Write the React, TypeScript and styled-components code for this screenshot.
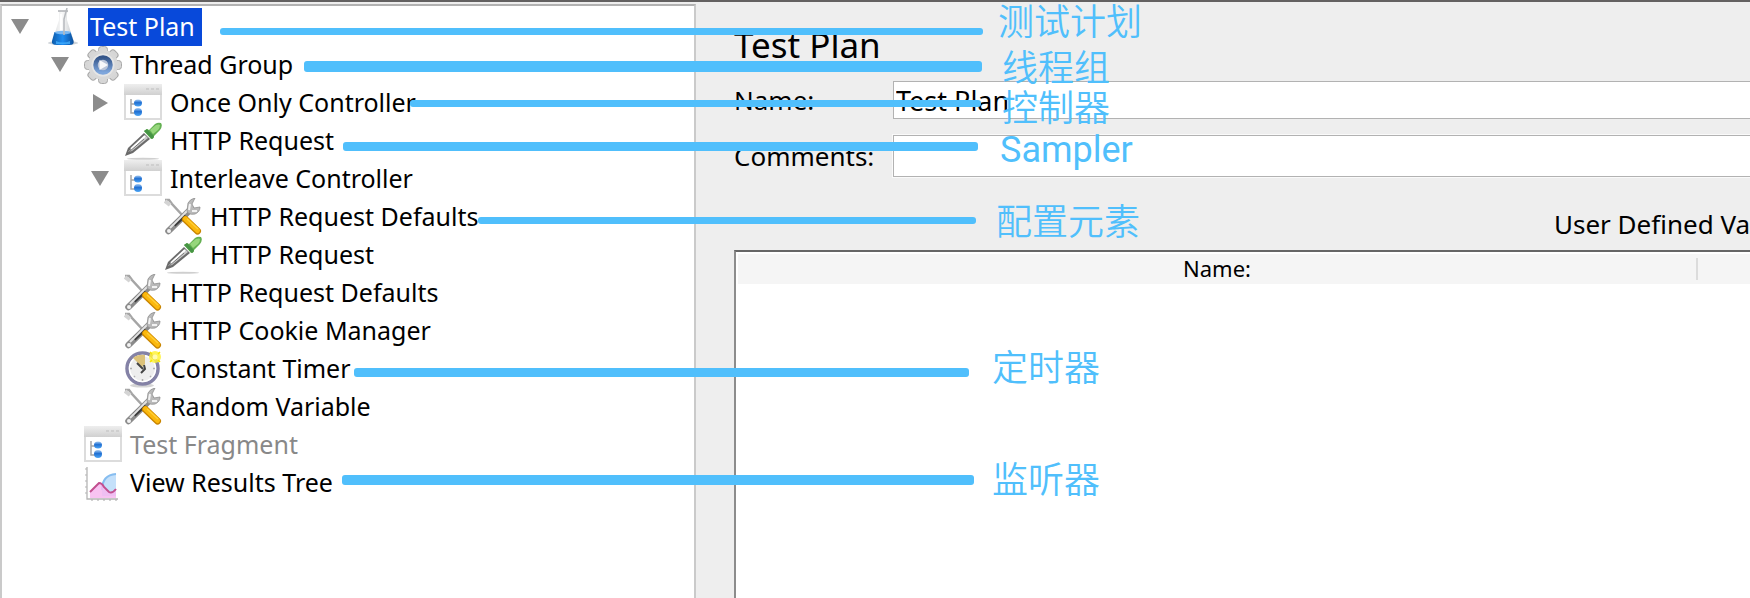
import React, { useState } from "react";
import styled, { createGlobalStyle } from "styled-components";

const accent = "#50bffc";
const uiFont = '"Noto Sans", "Noto Sans CJK SC", sans-serif';

const GlobalStyle = createGlobalStyle`
  *, *::before, *::after { box-sizing: border-box; }
  body { margin: 0; background: #eeeeee; color: #000; font-family: ${uiFont}; }
`;

const Window = styled.div`
  position: relative;
  display: grid;
  grid-template-columns: 696px minmax(0, 1fr);
  min-height: 100vh;
  overflow: hidden;
  border-top: 2px solid #636161;
  background: #eeeeee;
`;

/* ---------- tree ---------- */

const TreePane = styled.nav`
  margin-top: 2px;
  padding: 2px 0;
  background: #fff;
  border: 2px solid #cacaca;
  border-top-color: #b2b2b2;
  border-bottom: 0;
`;

const Branch = styled.ul<{ $nested?: boolean }>`
  margin: 0;
  padding: 0 0 0 ${(p) => (p.$nested ? 40 : 0)}px;
  list-style: none;
`;

const Row = styled.div`
  display: flex;
  align-items: center;
  gap: 6px;
  height: 38px;
`;

const ToggleSlot = styled.span`
  flex: none;
  display: flex;
  justify-content: center;
  width: 36px;
`;

const Toggle = styled.button`
  display: flex;
  padding: 0;
  border: 0;
  background: none;
  cursor: pointer;
`;

const IconBox = styled.svg`
  flex: none;
  width: 38px;
  height: 38px;
`;

const NodeLabel = styled.button<{ $selected?: boolean; $disabled?: boolean }>`
  height: 38px;
  padding: 0 7px 2px 2px;
  border: 0;
  font-family: inherit;
  font-size: 25px;
  line-height: 36px;
  white-space: nowrap;
  text-align: left;
  color: ${(p) => (p.$selected ? "#fff" : p.$disabled ? "#888" : "#000")};
  background: ${(p) => (p.$selected ? "#0849da" : "transparent")};
`;

/* ---------- editor ---------- */

const Editor = styled.main`
  min-width: 0;
  display: flex;
  flex-direction: column;
  padding: 20px 0 0 38px;
`;

const Title = styled.h1`
  margin: 0 0 13px;
  font-size: 35px;
  line-height: 46px;
  font-weight: 400;
`;

const Field = styled.div`
  display: grid;
  grid-template-columns: 159px minmax(0, 1fr);
  align-items: center;
  margin-bottom: 16px;
`;

const FieldLabel = styled.label`
  font-size: 26px;
  line-height: 38px;
`;

const TextBox = styled.input<{ $tall?: boolean }>`
  width: 100%;
  height: ${(p) => (p.$tall ? 42 : 38)}px;
  margin: 0;
  padding: 0 2px;
  border: solid #b2b2b2;
  border-width: 1px 0 1px 1px;
  border-radius: 0;
  outline: ${(p) => (p.$tall ? "1px solid #fafafa" : "none")};
  background: #fff;
  color: #000;
  font-family: inherit;
  font-size: 27px;
`;

const TableTitle = styled.h2`
  align-self: flex-end;
  width: 196px;
  margin: 13px 0 8px;
  overflow: hidden;
  font-size: 26px;
  line-height: 36px;
  font-weight: 400;
  white-space: nowrap;
`;

const TableFrame = styled.div`
  flex: 1;
  padding: 2px 0 0 2px;
  border-top: 2px solid #666;
  border-left: 2px solid #8c8c8c;
  background: #fff;
`;

const Table = styled.table`
  width: 100%;
  table-layout: fixed;
  border-collapse: collapse;
  background: #f5f5f5;
`;

const HeadCell = styled.th<{ $last?: boolean }>`
  width: ${(p) => (p.$last ? "52px" : "auto")};
  height: 30px;
  padding: 0;
  font-size: 22px;
  line-height: 20px;
  font-weight: 400;
`;

const HeadText = styled.span<{ $divided?: boolean }>`
  display: block;
  height: 22px;
  border-right: ${(p) => (p.$divided ? "2px solid #dcdcdc" : "0")};
`;

/* ---------- annotations drawn over the window ---------- */

const Overlay = styled.div`
  position: absolute;
  inset: -2px 0 0;
  pointer-events: none;
`;

const Line = styled.span<{ $x: number; $y: number; $w: number; $h: number }>`
  position: absolute;
  left: ${(p) => p.$x}px;
  top: ${(p) => p.$y}px;
  width: ${(p) => p.$w}px;
  height: ${(p) => p.$h}px;
  border-radius: 3px;
  background: ${accent};
`;

const Note = styled.span<{ $x: number; $y: number; $latin?: boolean }>`
  position: absolute;
  left: ${(p) => p.$x}px;
  top: ${(p) => p.$y}px;
  color: ${accent};
  font-family: ${(p) =>
    p.$latin ? 'Roboto, "Liberation Sans", sans-serif' : '"Noto Sans CJK SC", sans-serif'};
  font-size: 36px;
  font-weight: ${(p) => (p.$latin ? 400 : 350)};
  line-height: 36px;
  white-space: nowrap;
`;

/* ---------- icons ---------- */

type IconName = "flask" | "gear" | "controller" | "dropper" | "tools" | "clock" | "chart";

const Flask = () => (
  <>
    <defs>
      <linearGradient id="glass" x1="0" x2="1">
        <stop offset="0" stopColor="#d9dbdd" />
        <stop offset=".45" stopColor="#fafafa" />
        <stop offset="1" stopColor="#c4c8cb" />
      </linearGradient>
      <linearGradient id="liquid" x1="0" x2="1">
        <stop offset="0" stopColor="#0d5cab" />
        <stop offset=".5" stopColor="#1e8cf2" />
        <stop offset="1" stopColor="#0c4f9c" />
      </linearGradient>
    </defs>
    <ellipse cx="19" cy="35" rx="15" ry="2" fill="#b9c0c8" opacity=".7" />
    <path d="M15 3h9l-1 2v7l7 22q0 3-4 3H12q-4 0-4-3l7-22V5z" fill="url(#glass)" />
    <path d="M14 3h10" stroke="#aeb1b4" strokeWidth="1.5" />
    <path d="M10.500 24h16l3 9q1 4-4 4H13q-6 0-5-4z" fill="url(#liquid)" />
    <ellipse cx="19" cy="24.500" rx="8" ry="1.800" fill="#79b8f3" />
    <path d="M12 33q7 3 14 0v3H12z" fill="#49b4ff" opacity=".7" />
    <path d="M23 0l-3 11v16" fill="none" stroke="#b6b9bd" strokeWidth="1.500" />
    <path d="M17 6v16" stroke="#fff" strokeWidth="2" />
  </>
);

const Gear = () => (
  <>
    <defs>
      <linearGradient id="ring" x1="0" y1="0" x2="0" y2="1">
        <stop offset="0" stopColor="#34558a" />
        <stop offset="1" stopColor="#7ea6dc" />
      </linearGradient>
    </defs>
    <g fill="#d6d6d6" stroke="#a8a8a8" strokeWidth="1">
      {[0, 45, 90, 135].map((a) => (
        <rect key={a} x="14.500" y=".5" width="9" height="37" rx="3" transform={`rotate(${a} 19 19)`} />
      ))}
    </g>
    <circle cx="19" cy="19" r="15" fill="#d8d8d8" />
    <circle cx="19" cy="19" r="11.500" fill="#e6e6e6" />
    <circle cx="19" cy="19" r="7.500" fill="#b9c4d8" stroke="url(#ring)" strokeWidth="4.500" />
    <path d="M15.500 14l8.500 5-8.500 5z" fill="#f7f8fa" />
  </>
);

const Controller = () => (
  <>
    <defs>
      <linearGradient id="bar" x1="0" y1="0" x2="0" y2="1">
        <stop offset="0" stopColor="#eeeeee" />
        <stop offset="1" stopColor="#d0d0d0" />
      </linearGradient>
      <linearGradient id="ball" x1="0" y1="0" x2="0" y2="1">
        <stop offset="0" stopColor="#a5cbf3" />
        <stop offset=".45" stopColor="#1f6fd2" />
        <stop offset="1" stopColor="#4ea6f5" />
      </linearGradient>
    </defs>
    <rect x="1" y="1" width="36" height="34" fill="#fff" stroke="#dcdcdc" strokeWidth="2" />
    <rect x="0" y="0" width="38" height="11" fill="url(#bar)" />
    <path d="M22 5h3m2 0h3m2 0h3" stroke="#cfcfcf" strokeWidth="2" />
    <path d="M7 15v14h4M7 20h4" fill="none" stroke="#a5a5a5" strokeWidth="1.500" />
    <ellipse cx="14" cy="19" rx="4" ry="3.500" fill="url(#ball)" />
    <ellipse cx="14" cy="28" rx="4" ry="4" fill="url(#ball)" />
  </>
);

const Dropper = () => (
  <>
    <ellipse cx="19" cy="36.800" rx="16" ry="1" fill="#cfcfcf" />
    <path d="M1 34l3-8L20 11l6 6L9 31z" fill="#6b6b6b" />
    <path d="M4 30L21 13l3 3L8 29z" fill="#c9c9c9" />
    <path d="M7 27L21 14" stroke="#fff" strokeWidth="2" />
    <path d="M5 30L20 17" stroke="#777" strokeWidth="1" />
    <path d="M20 9l3-2 2 1 6-6q3-2 6-1 2 3-1 7l-6 6q0 3-3 3z" fill="#64b052" />
    <path d="M26 8l6-5q3-1 4 0 0 3-2 5l-5 4z" fill="#96d67c" />
    <path d="M20 9l8 8q2-1 2-3l-7-7z" fill="#469445" />
  </>
);

const Tools = () => (
  <>
    <path d="M1 2l4 0 3 4 12 13" fill="none" stroke="#a5a5a5" strokeWidth="2.500" />
    <path d="M1 3l5 4" stroke="#d4d4d4" strokeWidth="4" />
    <path d="M4.500 33L27 11" stroke="#8b8b8b" strokeWidth="6.500" strokeLinecap="round" />
    <path d="M10 27L21 17" stroke="#393939" strokeWidth="4" />
    <path d="M6 30L25 11" stroke="#e3e3e3" strokeWidth="2" />
    <circle cx="5" cy="33" r="2" fill="#f3f3f3" />
    <path d="M23 13l1-8q2-4 7-5l-3 6 2 4 6-1q0 5-5 7-4 1-7-1z" fill="#b9b9b9" stroke="#8f8f8f" strokeWidth=".8" />
    <path d="M25 12l1-6m2 7h5" stroke="#f2f2f2" strokeWidth="2" />
    <path d="M21.500 21.500L33.500 33" stroke="#c98500" strokeWidth="7" strokeLinecap="round" />
    <path d="M21.500 21L33.500 32.500" stroke="#fbb80d" strokeWidth="5" strokeLinecap="round" />
    <path d="M23 21l11 10" stroke="#ffcf3a" strokeWidth="1.300" />
  </>
);

const Clock = () => (
  <>
    <ellipse cx="18" cy="35.500" rx="12" ry="2" fill="#d5d5d5" />
    <circle cx="18.500" cy="18.500" r="15.500" fill="#eeeeee" stroke="#8482a6" strokeWidth="3.500" />
    <circle cx="18.500" cy="18.500" r="13" fill="none" stroke="#fff" strokeWidth="1.500" />
    <path d="M9 8q5-4 12-3v9l-3 3z" fill="#dcc27a" />
    <path d="M13 13l6 6M20 15l1 4-4 4" fill="none" stroke="#444" strokeWidth="2" />
    <path d="M18.500 29v2M29 18.500h2M6 18.500h2M10 27l1-1M27 27l-1-1" stroke="#b0b0b0" strokeWidth="1.500" />
    <circle cx="31" cy="7" r="6" fill="#fff23a" opacity=".85" />
    <circle cx="31" cy="7" r="2.500" fill="#fffbb0" />
    <path d="M26 2l2 2M36 2l-2 2M26 12l2-2M36 12l-2-2" stroke="#f6e400" strokeWidth="1.500" />
  </>
);

const Chart = () => (
  <>
    <path d="M3 3v32h31" fill="none" stroke="#b5b5b5" strokeWidth="1.300" />
    <path d="M1 5h2M1 11h2M1 17h2M1 23h2M1 29h2M8 35v2M14 35v2M20 35v2M26 35v2M32 35v2" stroke="#b5b5b5" strokeWidth="1.200" />
    <path d="M18 30q-2-17 14-20v22H18z" fill="#c4e0fa" />
    <path d="M18 26q0-15 14-16" fill="none" stroke="#86bdf0" strokeWidth="2" />
    <path d="M6 28l5-5 4-4q3-1 5 4l5 5 3 1 4-3v8H6z" fill="#f7b9f0" opacity=".85" />
    <path d="M6 28l5-5 4-4q3 0 5 4l5 5q3 2 7-3" fill="none" stroke="#c24f8f" strokeWidth="2" />
  </>
);

const drawings: Record<IconName, React.FC> = {
  flask: Flask,
  gear: Gear,
  controller: Controller,
  dropper: Dropper,
  tools: Tools,
  clock: Clock,
  chart: Chart,
};

const NodeIcon = ({ name }: { name: IconName }) => {
  const Drawing = drawings[name];
  return (
    <IconBox viewBox="0 0 38 38" aria-hidden="true">
      <Drawing />
    </IconBox>
  );
};

const Arrow = ({ open }: { open: boolean }) => (
  <svg width="18" height="18" viewBox="0 0 18 18" aria-hidden="true">
    <path d={open ? "M0 1h18L9 16z" : "M2 0v18l15-9z"} fill="#8c8c8c" />
  </svg>
);

/* ---------- data ---------- */

interface TreeNode {
  id: string;
  label: string;
  icon: IconName;
  expandable?: boolean;
  disabled?: boolean;
  children?: TreeNode[];
}

const plan: TreeNode[] = [
  {
    id: "plan",
    label: "Test Plan",
    icon: "flask",
    expandable: true,
    children: [
      {
        id: "group",
        label: "Thread Group",
        icon: "gear",
        expandable: true,
        children: [
          { id: "once", label: "Once Only Controller", icon: "controller", expandable: true },
          { id: "request", label: "HTTP Request", icon: "dropper" },
          {
            id: "interleave",
            label: "Interleave Controller",
            icon: "controller",
            expandable: true,
            children: [
              { id: "inner-defaults", label: "HTTP Request Defaults", icon: "tools" },
              { id: "inner-request", label: "HTTP Request", icon: "dropper" },
            ],
          },
          { id: "defaults", label: "HTTP Request Defaults", icon: "tools" },
          { id: "cookies", label: "HTTP Cookie Manager", icon: "tools" },
          { id: "timer", label: "Constant Timer", icon: "clock" },
          { id: "random", label: "Random Variable", icon: "tools" },
        ],
      },
      { id: "fragment", label: "Test Fragment", icon: "controller", disabled: true },
      { id: "results", label: "View Results Tree", icon: "chart" },
    ],
  },
];

const notes = [
  { text: "测试计划", x: 998, y: 1, line: [220, 28, 763, 7] },
  { text: "线程组", x: 1002, y: 47, line: [304, 61, 678, 11] },
  { text: "控制器", x: 1002, y: 87, line: [410, 100, 571, 7] },
  { text: "Sampler", x: 1000, y: 132, latin: true, line: [343, 142, 635, 9] },
  { text: "配置元素", x: 996, y: 201, line: [478, 217, 498, 7] },
  { text: "定时器", x: 992, y: 347, line: [354, 368, 615, 9] },
  { text: "监听器", x: 992, y: 459, line: [342, 475, 632, 10] },
];

interface NodeProps {
  node: TreeNode;
  open: Record<string, boolean>;
  selected: string;
  onToggle: (id: string) => void;
  onSelect: (id: string) => void;
}

const Node = ({ node, open, selected, onToggle, onSelect }: NodeProps) => {
  const isOpen = !!open[node.id];
  return (
    <li>
      <Row>
        <ToggleSlot>
          {node.expandable && (
            <Toggle
              type="button"
              aria-expanded={isOpen}
              aria-label={node.label}
              onClick={() => onToggle(node.id)}
            >
              <Arrow open={isOpen} />
            </Toggle>
          )}
        </ToggleSlot>
        <NodeIcon name={node.icon} />
        <NodeLabel
          type="button"
          $selected={selected === node.id}
          $disabled={node.disabled}
          onClick={() => onSelect(node.id)}
        >
          {node.label}
        </NodeLabel>
      </Row>
      {isOpen && node.children && (
        <Branch $nested>
          {node.children.map((child) => (
            <Node
              key={child.id}
              node={child}
              open={open}
              selected={selected}
              onToggle={onToggle}
              onSelect={onSelect}
            />
          ))}
        </Branch>
      )}
    </li>
  );
};

export default function App() {
  const [open, setOpen] = useState<Record<string, boolean>>({
    plan: true,
    group: true,
    interleave: true,
  });
  const [selected, setSelected] = useState("plan");

  return (
    <>
      <GlobalStyle />
      <Window>
        <TreePane>
          <Branch>
            {plan.map((node) => (
              <Node
                key={node.id}
                node={node}
                open={open}
                selected={selected}
                onToggle={(id) => setOpen((o) => ({ ...o, [id]: !o[id] }))}
                onSelect={setSelected}
              />
            ))}
          </Branch>
        </TreePane>
        <Editor>
          <Title>Test Plan</Title>
          <Field>
            <FieldLabel htmlFor="plan-name">Name:</FieldLabel>
            <TextBox id="plan-name" type="text" defaultValue="Test Plan" />
          </Field>
          <Field>
            <FieldLabel htmlFor="plan-comments">Comments:</FieldLabel>
            <TextBox id="plan-comments" type="text" $tall />
          </Field>
          <TableTitle>User Defined Va</TableTitle>
          <TableFrame>
            <Table>
              <thead>
                <tr>
                  <HeadCell scope="col">
                    <HeadText $divided>Name:</HeadText>
                  </HeadCell>
                  <HeadCell $last />
                </tr>
              </thead>
            </Table>
          </TableFrame>
        </Editor>
        <Overlay>
          {notes.map(({ text, x, y, latin, line: [lx, ly, lw, lh] }) => (
            <React.Fragment key={text}>
              <Line $x={lx} $y={ly} $w={lw} $h={lh} />
              <Note $x={x} $y={y} $latin={latin}>
                {text}
              </Note>
            </React.Fragment>
          ))}
        </Overlay>
      </Window>
    </>
  );
}
